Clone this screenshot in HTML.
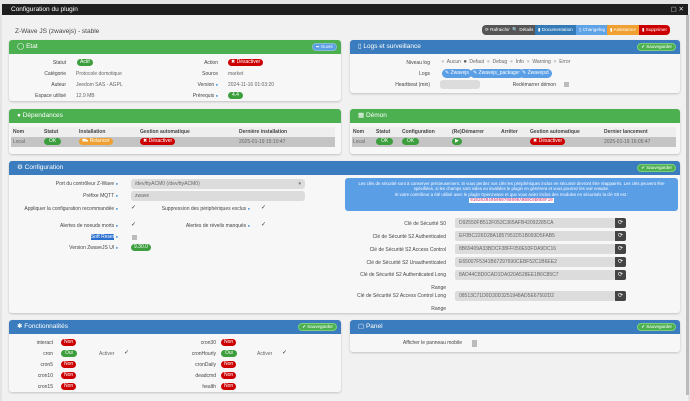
<!DOCTYPE html><html><head><meta charset="utf-8"><style>
*{box-sizing:border-box;margin:0;padding:0}
body{width:690px;height:401px;overflow:hidden;background:#e4e4e4;font-family:"Liberation Sans",sans-serif;font-size:5.5px;color:#555;position:relative}
.abs{position:absolute}
.modal{left:2px;top:4px;width:686px;height:397px;background:#f1f1f1}
.tbar{left:2px;top:4px;width:686px;height:11px;background:#1e1e1e;color:#fff;font-size:6.5px;line-height:11px;padding-left:9px}
.pan{position:absolute;background:#f7f7f7;border-radius:3px;box-shadow:0 1px 2px rgba(0,0,0,.2)}
.hd{height:14px;border-radius:3px 3px 0 0;color:#fff;font-size:6.5px;line-height:14px;padding-left:8px;position:relative}
.g{background:#4caf50}.b{background:#3a7cbd}
.pill{display:inline-block;border-radius:5px;color:#fff;font-size:5px;line-height:7px;padding:0 3px;position:absolute}
.pg{background:#3c9e3c}.pr{background:#c00}.po{background:#f0a030}.pb{background:#5a9ee6}
.lab{position:absolute;text-align:right;font-size:5px;color:#444}
.t{position:absolute;font-size:5px;color:#666}
.inp{position:absolute;background:#dcdcdc;border-radius:3px;font-size:5px;color:#666;line-height:9px;padding-left:4px}
.th{position:absolute;font-size:5px;font-weight:bold;color:#444}
.sav{position:absolute;right:4px;top:3px;background:#4caf50;border:1px solid #7cd07c;border-radius:5px;font-size:4.5px;line-height:6px;padding:0 3px;color:#fff}
.chk{position:absolute;font-size:6px;color:#333}
.box{position:absolute;width:5px;height:5px;background:#bbb}
.key{position:absolute;left:455px;width:171px;height:10px}
.key .v{position:absolute;left:0;width:160px;height:10px;background:#dcdcdc;border-radius:2px;font-size:5px;line-height:10px;padding-left:4px;color:#666}
.key .r{position:absolute;left:160px;width:11px;height:10px;background:#444;border-radius:0 2px 2px 0;color:#fff;font-size:6px;text-align:center;line-height:10px}
.q{color:#3a8fd8;font-size:4px;vertical-align:top}
</style></head><body>
<div class="abs modal"></div>
<div class="abs tbar">Configuration du plugin<span style="position:absolute;right:4px;color:#ddd">▢ ✕</span></div>
<div class="abs" style="left:15px;top:28px;font-size:6.5px;color:#444">Z-Wave JS (zwavejs) - stable</div>
<div class="abs" style="left:482px;top:25px;height:10px;display:flex;font-size:4.6px;line-height:10px;color:#fff;border-radius:4px;overflow:hidden">
<span style="background:#555;width:53px;padding-left:3px">⟳ Rafraichir &nbsp;🔍 Détails</span><span style="background:#337ab7;width:41px;padding-left:3px">▮ Documentation</span><span style="background:#5ea2e8;width:31px;padding-left:3px">▯ Changelog</span><span style="background:#f0a030;width:32px;padding-left:3px">▮ Assistance</span><span style="background:#c00;width:31px;padding-left:3px">▮ Supprimer</span></div>

<div class="pan" style="left:9px;top:40px;width:332px;height:61px"><div class="hd g">◯ Etat<span class="sav" style="background:#5a9ee6;border-color:#8bc">➦ Ouvrir</span></div></div>
<div class="lab" style="left:20px;width:46px;top:60px">Statut</div><span class="pill pg" style="left:77px;top:59px">Actif</span>
<div class="lab" style="left:20px;width:46px;top:71px">Catégorie</div><div class="t" style="left:76px;top:71px">Protocole domotique</div>
<div class="lab" style="left:20px;width:46px;top:82px">Auteur</div><div class="t" style="left:76px;top:82px">Jeedom SAS - AGPL</div>
<div class="lab" style="left:20px;width:46px;top:93px">Espace utilisé</div><div class="t" style="left:76px;top:93px">12.9 MB</div>
<div class="lab" style="left:170px;width:48px;top:60px">Action</div><span class="pill pr" style="left:228px;top:59px">✖ Désactiver</span>
<div class="lab" style="left:170px;width:48px;top:71px">Source</div><div class="t" style="left:228px;top:71px">market</div>
<div class="lab" style="left:170px;width:48px;top:82px">Version <span class="q">●</span></div><div class="t" style="left:228px;top:82px">2024-11-16 01:03:20</div>
<div class="lab" style="left:170px;width:48px;top:93px">Prérequis <span class="q">●</span></div><span class="pill pg" style="left:228px;top:92px;padding:0 4px">4.4</span>

<div class="pan" style="left:9px;top:109px;width:332px;height:45px"><div class="hd g">● Dépendances</div></div>
<div class="abs" style="left:11px;top:127px;width:324px;height:10px;background:#eee"></div>
<div class="abs" style="left:11px;top:137px;width:324px;height:10px;background:#c4c4c4"></div>
<div class="th" style="left:13px;top:129px">Nom</div><div class="th" style="left:44px;top:129px">Statut</div><div class="th" style="left:79px;top:129px">Installation</div><div class="th" style="left:140px;top:129px">Gestion automatique</div><div class="th" style="left:239px;top:129px">Dernière installation</div>
<div class="t" style="left:13px;top:139px">Local</div><span class="pill pg" style="left:44px;top:138px;padding:0 5px">OK</span><span class="pill po" style="left:79px;top:138px">⛟ Relancer</span><span class="pill pr" style="left:140px;top:138px">✖ Désactiver</span><div class="t" style="left:239px;top:139px">2025-01-19 15:10:47</div>

<div class="pan" style="left:350px;top:40px;width:330px;height:53px"><div class="hd b">▯ Logs et surveillance<span class="sav">✔ Sauvegarder</span></div></div>
<div class="lab" style="left:380px;width:50px;top:60px">Niveau log</div>
<div class="t" style="left:441px;top:59px;word-spacing:1px"><span style="color:#ccc;font-size:6px">●</span> Aucun <span style="color:#555;font-size:6px">●</span> Defaut <span style="color:#ccc;font-size:6px">●</span> Debug <span style="color:#ccc;font-size:6px">●</span> Info <span style="color:#ccc;font-size:6px">●</span> Warning <span style="color:#ccc;font-size:6px">●</span> Error</div>
<div class="lab" style="left:380px;width:50px;top:71px">Logs</div>
<span class="pill pb" style="left:442px;top:69px;line-height:9px">✎ Zwavejs</span><span class="pill pb" style="left:470px;top:69px;line-height:9px">✎ Zwavejs_packages</span><span class="pill pb" style="left:519px;top:69px;line-height:9px">✎ Zwavejsd</span>
<div class="lab" style="left:380px;width:50px;top:82px">Heartbeat (min)</div><div class="inp" style="left:440px;top:80px;width:40px;height:9px"></div>
<div class="lab" style="left:500px;width:56px;top:82px">Redémarrer démon</div><div class="box" style="left:564px;top:82px"></div>

<div class="pan" style="left:350px;top:109px;width:330px;height:45px"><div class="hd g">▦ Démon</div></div>
<div class="abs" style="left:352px;top:127px;width:324px;height:10px;background:#eee"></div>
<div class="abs" style="left:352px;top:137px;width:324px;height:10px;background:#c4c4c4"></div>
<div class="th" style="left:353px;top:129px">Nom</div><div class="th" style="left:376px;top:129px">Statut</div><div class="th" style="left:402px;top:129px">Configuration</div><div class="th" style="left:452px;top:129px">(Re)Démarrer</div><div class="th" style="left:501px;top:129px">Arrêter</div><div class="th" style="left:530px;top:129px">Gestion automatique</div><div class="th" style="left:604px;top:129px">Dernier lancement</div>
<div class="t" style="left:353px;top:139px">Local</div><span class="pill pg" style="left:376px;top:138px;padding:0 5px">OK</span><span class="pill pg" style="left:402px;top:138px;padding:0 5px">OK</span><span class="pill pg" style="left:452px;top:138px">▶</span><span class="pill pr" style="left:530px;top:138px">✖ Désactiver</span><div class="t" style="left:604px;top:139px">2025-01-19 16:05:47</div>

<div class="pan" style="left:9px;top:161px;width:671px;height:152px"><div class="hd b">⚙ Configuration<span class="sav">✔ Sauvegarder</span></div></div>
<div class="lab" style="left:20px;width:98px;top:181px">Port du contrôleur Z-Wave <span class="q">●</span></div>
<div class="inp" style="left:131px;top:179px;width:174px;height:10px;line-height:10px">/dev/ttyACM0 (/dev/ttyACM0)<span style="position:absolute;right:4px">▾</span></div>
<div class="lab" style="left:20px;width:98px;top:193px">Préfixe MQTT <span class="q">●</span></div>
<div class="inp" style="left:131px;top:191px;width:174px;height:10px;line-height:10px">zwave</div>
<div class="lab" style="left:20px;width:98px;top:206px">Appliquer la configuration recommandée <span class="q">●</span></div><div class="chk" style="left:131px;top:204px">✓</div>
<div class="lab" style="left:150px;width:100px;top:206px">Suppression des périphériques exclus <span class="q">●</span></div><div class="chk" style="left:261px;top:204px">✓</div>
<div class="lab" style="left:20px;width:98px;top:223px">Alertes de noeuds morts <span class="q">●</span></div><div class="chk" style="left:131px;top:221px">✓</div>
<div class="lab" style="left:150px;width:100px;top:223px">Alertes de réveils manqués <span class="q">●</span></div><div class="chk" style="left:261px;top:221px">✓</div>
<div class="lab" style="left:20px;width:98px;top:234px"><span style="background:#2a6fd0;color:#fff">Soft Reset</span> <span class="q">●</span></div><div class="box" style="left:132px;top:235px"></div>
<div class="lab" style="left:20px;width:98px;top:245px">Version ZwaveJS UI <span class="q">●</span></div><span class="pill pg" style="left:131px;top:244px">9.30.0</span>
<div class="abs" style="left:345px;top:178px;width:333px;height:33px;background:#5a9ee6;border-radius:3px;color:#fff;font-size:4.3px;text-align:center;line-height:5.4px;padding:3px 4px 0">Les clés de sécurité sont à conserver précieusement. Si vous perdez vos clés les périphériques inclus en sécurisé devront être réappairés. Les clés peuvent être spécifiées, si les champs sont vides ou invalides le plugin en générera et vous pourrez les voir ensuite.<br>Si votre contrôleur a été utilisé avec le plugin Openzwave et que vous aviez inclus des modules en sécurisés la clé S0 est :<br><span style="background:#fff;color:#d0246a;font-family:'Liberation Mono',monospace;padding:0 1px">0102030405060708090A0B0C0D0E0F10</span></div>
<div class="lab" style="left:360px;width:86px;top:221px">Clé de Sécurité S0</div><div class="key" style="top:218px"><div class="v">D92550FB512F053C365AFB42092285CA</div><div class="r">⟳</div></div>
<div class="lab" style="left:360px;width:86px;top:234px">Clé de Sécurité S2 Authenticated</div><div class="key" style="top:231px"><div class="v">EF0BC226D28A1857951D51B093D5FAB5</div><div class="r">⟳</div></div>
<div class="lab" style="left:360px;width:86px;top:247px">Clé de Sécurité S2 Access Control</div><div class="key" style="top:244px"><div class="v">8B69409A33BDCF38FF050E93FDA9DC16</div><div class="r">⟳</div></div>
<div class="lab" style="left:360px;width:86px;top:260px">Clé de Sécurité S2 Unauthenticated</div><div class="key" style="top:257px"><div class="v">E65007F5341B67297690CEBF52C1B6EE2</div><div class="r">⟳</div></div>
<div class="lab" style="left:350px;width:96px;top:272px">Clé de Sécurité S2 Authenticated Long</div><div class="lab" style="left:350px;width:96px;top:285px">Range</div><div class="key" style="top:270px"><div class="v">8AD44C8D0CAD1DA020A528EE1B6C85C7</div><div class="r">⟳</div></div>
<div class="lab" style="left:350px;width:96px;top:293px">Clé de Sécurité S2 Access Control Long</div><div class="lab" style="left:350px;width:96px;top:306px">Range</div><div class="key" style="top:291px"><div class="v">08513C71D0D30D3251948AD5E67502D2</div><div class="r">⟳</div></div>

<div class="pan" style="left:9px;top:320px;width:332px;height:72px"><div class="hd b">✱ Fonctionnalités<span class="sav">✔ Sauvegarder</span></div></div>
<div class="lab" style="left:20px;width:33px;top:340px">interact</div><span class="pill pr" style="left:61px;top:339px">Non</span>
<div class="lab" style="left:20px;width:33px;top:351px">cron</div><span class="pill pg" style="left:61px;top:350px;padding:0 4px">Oui</span><div class="t" style="left:99px;top:351px">Activer</div><div class="chk" style="left:124px;top:349px">✓</div>
<div class="lab" style="left:20px;width:33px;top:362px">cron5</div><span class="pill pr" style="left:61px;top:361px">Non</span>
<div class="lab" style="left:20px;width:33px;top:373px">cron10</div><span class="pill pr" style="left:61px;top:372px">Non</span>
<div class="lab" style="left:20px;width:33px;top:384px">cron15</div><span class="pill pr" style="left:61px;top:383px">Non</span>
<div class="lab" style="left:160px;width:56px;top:340px">cron30</div><span class="pill pr" style="left:221px;top:339px">Non</span>
<div class="lab" style="left:160px;width:56px;top:351px">cronHourly</div><span class="pill pg" style="left:221px;top:350px;padding:0 4px">Oui</span><div class="t" style="left:257px;top:351px">Activer</div><div class="chk" style="left:282px;top:349px">✓</div>
<div class="lab" style="left:160px;width:56px;top:362px">cronDaily</div><span class="pill pr" style="left:221px;top:361px">Non</span>
<div class="lab" style="left:160px;width:56px;top:373px">deadcmd</div><span class="pill pr" style="left:221px;top:372px">Non</span>
<div class="lab" style="left:160px;width:56px;top:384px">health</div><span class="pill pr" style="left:221px;top:383px">Non</span>

<div class="pan" style="left:350px;top:320px;width:330px;height:32px"><div class="hd b">▢ Panel<span class="sav">✔ Sauvegarder</span></div></div>
<div class="lab" style="left:380px;width:82px;top:340px">Afficher le panneau mobile</div><div class="box" style="left:472px;top:340px;height:7px"></div>
<div class="abs" style="left:686px;top:15px;width:3px;height:380px;background:#bbb"></div>
</body></html>
